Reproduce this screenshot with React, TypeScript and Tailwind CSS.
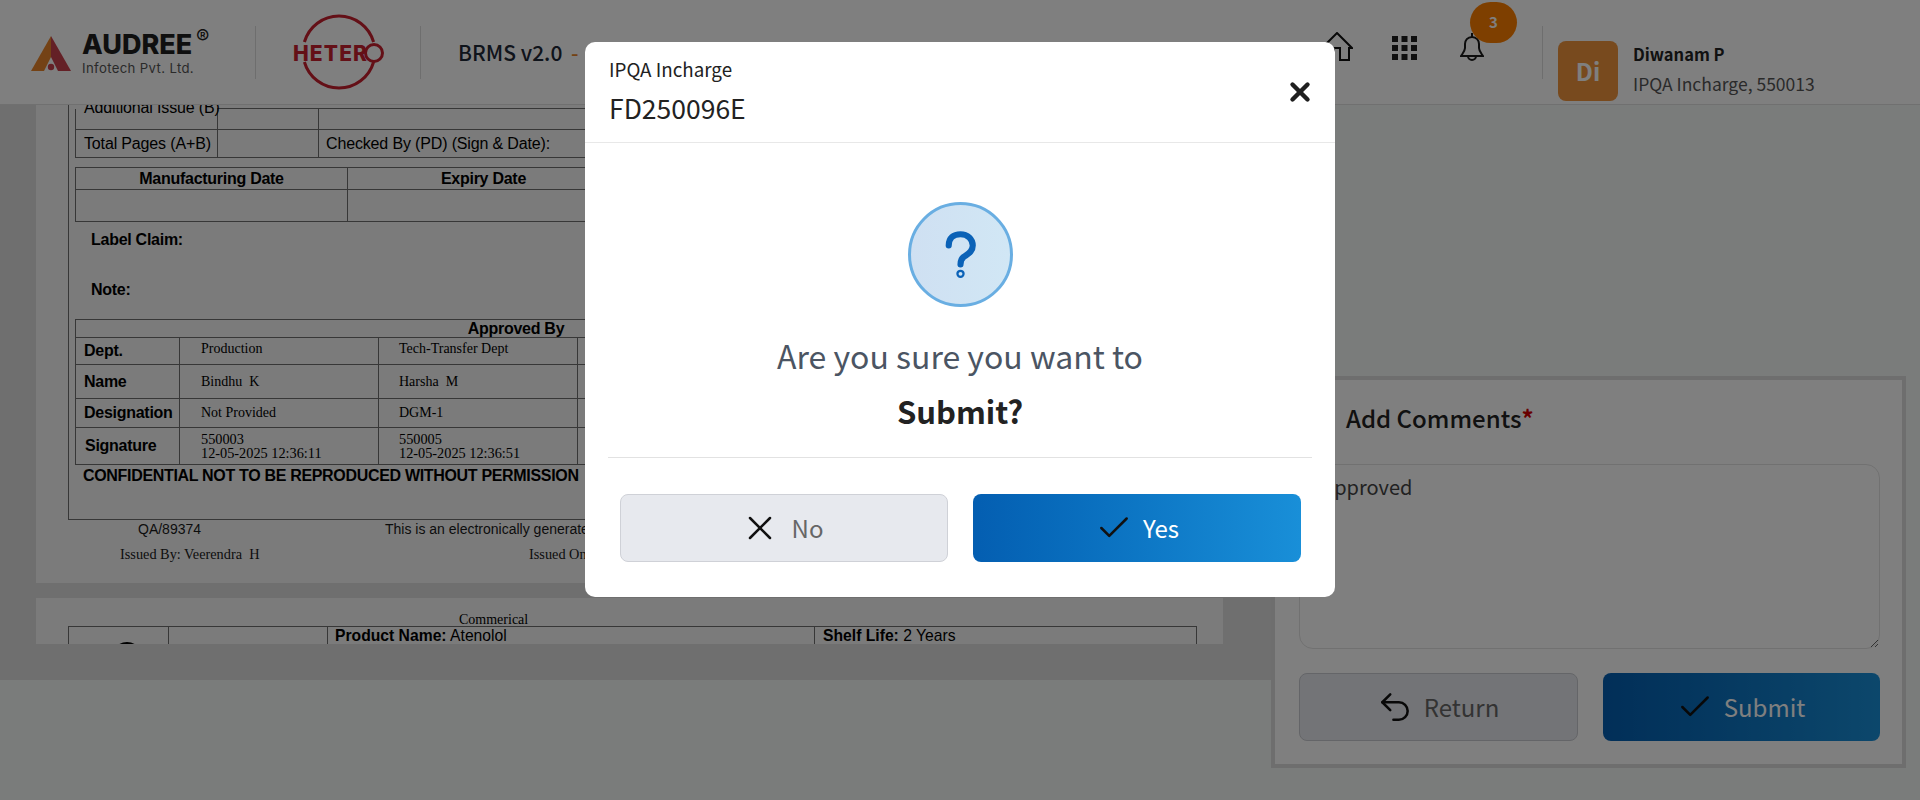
import { Check, Undo2, X } from "lucide-react";

const sans = "font-['Noto_Sans_CJK_SC','Noto_Sans',sans-serif]";
const arial = "font-['Liberation_Sans',Arial,sans-serif]";
const serif = "font-['Liberation_Serif','Times_New_Roman',serif]";
const cell = "border border-[#6e6e6e] p-0 align-middle";
const rowHead = `${arial} text-[16px] font-bold tracking-[-0.27px]`;

function AudreeLogo() {
  return (
    <div className="relative mt-[30px] flex h-[48px] w-[176px] items-start">
      <svg width="40" height="35" viewBox="0 0 40 35" className="mt-[6px] shrink-0">
        <polygon points="0,35 20,0 20,21 13,35" fill="#e8852a" />
        <polygon points="20,0 40,35 27,35 20,21" fill="#c8404c" />
        <circle cx="20" cy="31" r="3.2" fill="#c8404c" />
      </svg>
      <div className="ml-[11px] flex flex-col pt-[3px] font-['Inter',sans-serif] whitespace-nowrap">
        <span className="text-[27px] leading-[24px] font-extrabold text-[#1f1f1f]">AUDREE</span>
        <span className="mt-[2px] text-[13.2px] leading-[18px] tracking-[0.35px] text-[#555]">Infotech Pvt. Ltd.</span>
      </div>
      <span className="-mt-[5px] ml-[2px] font-['Inter',sans-serif] text-[20px] leading-[24px] text-[#222]">®</span>
    </div>
  );
}

function HeteroLogo() {
  return (
    <svg width="92" height="76" viewBox="0 0 92 76" className="mt-[14px] ml-[36px]">
      <path d="M12.4 28 A36 36 0 0 1 81.6 28 M81.6 48 A36 36 0 0 1 12.4 48" fill="none" stroke="#c8202f" strokeWidth="3" />
      <text x="1" y="47" fontFamily="Inter, sans-serif" fontWeight="800" fontSize="21" fill="#c8202f" textLength="74">
        HETER
      </text>
      <circle cx="82" cy="39" r="8.5" fill="none" stroke="#c8202f" strokeWidth="3" />
    </svg>
  );
}

function Header() {
  return (
    <header className={`flex h-[105px] shrink-0 items-start border-b border-[#e0e0e0] bg-white pl-[31px] ${sans}`}>
      <AudreeLogo />
      <div className="mt-[26px] ml-[48px] h-[53px] w-px bg-[#dcdcdc]" />
      <HeteroLogo />
      <div className="mt-[26px] ml-[36px] h-[53px] w-px bg-[#dcdcdc]" />
      <div className="mt-[35px] ml-[37px] text-[21px] leading-[34px] font-medium text-[#1f2937]">
        BRMS v2.0 <span className="ml-[4px] text-[#e8852a]">-</span>
      </div>

      <div className="ml-auto flex items-start pr-[86px]">
        <svg width="32" height="30" viewBox="0 0 32 30" className="mt-[32px]">
          <path d="M16 1 L31 16 H28 V28 H19 V16 H13 V28 H4 V16 H1 Z" fill="none" stroke="#111" strokeWidth="2" />
        </svg>
        <svg width="25" height="24" viewBox="0 0 25 24" className="mt-[36px] ml-[39px]" fill="#1f1f1f">
          {[0, 9.5, 19].map((x) =>
            [0, 9, 18].map((y) => <rect key={`${x}-${y}`} x={x} y={y} width="6" height="6" />),
          )}
        </svg>
        <div className="relative mt-[33px] ml-[43px] h-[30px] w-[24px]">
          <svg width="24" height="30" viewBox="0 0 24 30" fill="none" stroke="#1a1a1a" strokeWidth="2">
            <path d="M12 0 V4 M12 4 C7.5 4 5 7.5 5 11 V15 C5 18 3 20 1 23 H23 C21 20 19 18 19 15 V11 C19 7.5 16.5 4 12 4 Z M8 23 A4 4 0 0 0 16 23" />
          </svg>
          <span className="absolute top-[-31px] left-[10px] flex h-[41px] w-[47px] items-center justify-center rounded-full bg-[#fd7f00] text-[15px] font-bold text-white">
            3
          </span>
        </div>
        <div className="mt-[26px] ml-[58px] h-[53px] w-px bg-[#dcdcdc]" />
        <div className="mt-[41px] ml-[15px] flex h-[60px] w-[60px] items-center justify-center rounded-lg bg-[#f0943c] text-[24px] font-semibold text-white">
          Di
        </div>
        <div className="mt-[39px] ml-[15px] flex w-[201px] flex-col">
          <span className="text-[16.5px] leading-[30px] font-semibold text-[#222]">Diwanam P</span>
          <span className="text-[17.5px] leading-[30px] text-[#555]">IPQA Incharge, 550013</span>
        </div>
      </div>
    </header>
  );
}

function FirstPage() {
  return (
    <div className={`h-[478px] bg-[#f7f7f7] pl-[32px] text-black ${arial}`}>
      <div className="h-[415px] border-b border-l border-[#6e6e6e] pt-[3px] pl-[6px]">
        <table className="w-[1122px] table-fixed border-collapse text-[16px] tracking-[-0.15px]">
          <colgroup>
            <col className="w-[142px]" />
            <col className="w-[101px]" />
            <col />
          </colgroup>
          <tbody>
            <tr className="h-[21px]">
              <td className={`${cell} border-t-0`}>
                <span className="relative -top-[11px] block pl-[8px] leading-[18px] whitespace-nowrap">Additional Issue (B)</span>
              </td>
              <td className={cell} />
              <td className={cell} />
            </tr>
            <tr className="h-[28px]">
              <td className={`${cell} pl-[8px] whitespace-nowrap`}>Total Pages (A+B)</td>
              <td className={cell} />
              <td className={`${cell} pl-[7px]`}>Checked By (PD) (Sign &amp; Date):</td>
            </tr>
          </tbody>
        </table>

        <table className="mt-[9px] w-[1122px] table-fixed border-collapse text-[16px] leading-[18px] font-bold tracking-[-0.27px]">
          <colgroup>
            <col className="w-[272px]" />
            <col className="w-[272px]" />
            <col />
          </colgroup>
          <tbody>
            <tr className="h-[22px] text-center">
              <td className={cell}>Manufacturing Date</td>
              <td className={cell}>Expiry Date</td>
              <td className={cell} />
            </tr>
            <tr className="h-[32px]">
              <td className={cell} />
              <td className={cell} />
              <td className={cell} />
            </tr>
          </tbody>
        </table>

        <p className="mt-[8px] pl-[16px] text-[16px] leading-[20px] font-bold tracking-[-0.27px]">Label Claim:</p>
        <p className="mt-[30px] pl-[16px] text-[16px] leading-[20px] font-bold tracking-[-0.27px]">Note:</p>

        <table className="mt-[19px] w-[882px] table-fixed border-collapse">
          <colgroup>
            <col className="w-[104px]" />
            <col className="w-[199px]" />
            <col className="w-[199px]" />
            <col className="w-[190px]" />
            <col />
          </colgroup>
          <tbody className={`${serif} text-[14px] leading-[14px]`}>
            <tr className="h-[18px]">
              <td colSpan={5} className={`${cell} text-center ${rowHead}`}>
                Approved By
              </td>
            </tr>
            <tr className="h-[27px]">
              <td className={`${cell} pl-[8px] ${rowHead}`}>Dept.</td>
              <td className={`${cell} pb-[4px] pl-[21px]`}>Production</td>
              <td className={`${cell} pb-[4px] pl-[20px]`}>Tech-Transfer Dept</td>
              <td className={cell} />
              <td className={cell} />
            </tr>
            <tr className="h-[34px]">
              <td className={`${cell} pl-[8px] ${rowHead}`}>Name</td>
              <td className={`${cell} pl-[21px] whitespace-pre`}>Bindhu  K</td>
              <td className={`${cell} pl-[20px] whitespace-pre`}>Harsha  M</td>
              <td className={cell} />
              <td className={cell} />
            </tr>
            <tr className="h-[29px]">
              <td className={`${cell} pl-[8px] ${rowHead}`}>Designation</td>
              <td className={`${cell} pl-[21px]`}>Not Provided</td>
              <td className={`${cell} pl-[20px]`}>DGM-1</td>
              <td className={cell} />
              <td className={cell} />
            </tr>
            <tr className="h-[37px]">
              <td className={`${cell} pl-[9px] ${rowHead}`}>Signature</td>
              <td className={`${cell} pl-[21px] text-[14.3px] leading-[14px]`}>
                550003
                <br />
                12-05-2025 12:36:11
              </td>
              <td className={`${cell} pl-[20px] text-[14.3px] leading-[14px]`}>
                550005
                <br />
                12-05-2025 12:36:51
              </td>
              <td className={cell} />
              <td className={cell} />
            </tr>
          </tbody>
        </table>
        <p className="mt-[1px] pl-[8px] text-[16px] leading-[20px] font-bold tracking-[-0.32px]">
          CONFIDENTIAL NOT TO BE REPRODUCED WITHOUT PERMISSION
        </p>
      </div>

      <div className="flex h-[18px] items-center text-[14px] text-[#1a1a1a]">
        <span className="ml-[70px] w-[247px]">QA/89374</span>
        <span>This is an electronically generated document</span>
      </div>
      <div className={`mt-[8px] flex h-[18px] items-center text-[14.3px] text-[#1a1a1a] ${serif}`}>
        <span className="ml-[52px] w-[409px] whitespace-pre">Issued By: Veerendra  H</span>
        <span>Issued On: 12-05-2025</span>
      </div>
    </div>
  );
}

function SecondPage() {
  return (
    <div className={`mt-[15px] h-[46px] overflow-hidden bg-[#f7f7f7] pl-[32px] text-black ${arial}`}>
      <p className={`pt-[15px] pl-[391px] text-[14px] leading-[13px] ${serif}`}>Commerical</p>
      <table className="w-[1129px] table-fixed border-collapse text-[15.7px]">
        <colgroup>
          <col className="w-[100px]" />
          <col className="w-[159px]" />
          <col className="w-[487px]" />
          <col />
        </colgroup>
        <tbody>
          <tr className="h-[60px]">
            <td className={`${cell} align-top`}>
              <div className="mt-[15px] ml-[43px] h-[30px] w-[30px] rounded-full bg-black" />
            </td>
            <td className={cell} />
            <td className={`${cell} pl-[7px] align-top leading-[18px]`}>
              <b>Product Name:</b> Atenolol
            </td>
            <td className={`${cell} pl-[8px] align-top leading-[18px]`}>
              <b>Shelf Life:</b> 2 Years
            </td>
          </tr>
        </tbody>
      </table>
    </div>
  );
}

function CommentsPanel() {
  return (
    <div className={`h-[392px] w-[635px] border-[4px] border-[#dcdcdc] bg-white pt-[20px] pr-[22px] pl-[24px] ${sans}`}>
      <h3 className="pl-[47px] text-[24px] leading-[36px] font-medium text-[#222]">
        Add Comments<span className="font-bold text-[#d00000]">*</span>
      </h3>
      <textarea
        defaultValue="Approved"
        className="mt-[28px] block h-[185px] w-full rounded-[14px] border border-[#e2e2e2] px-[22px] py-[5px] text-[20px] leading-[34px] text-[#444] outline-none"
      />
      <div className="mt-[24px] flex gap-[25px]">
        <button className="flex h-[68px] flex-1 items-center justify-center gap-[10px] rounded-lg border border-[#c8cad0] bg-[#e7e9ee] pr-[2px] text-[24px] text-[#666]">
          <Undo2 size={38} strokeWidth={1.6} color="#111" />
          Return
        </button>
        <button className="flex h-[68px] flex-1 items-center justify-center gap-[10px] rounded-lg bg-gradient-to-r from-[#045eb1] to-[#198fd8] pr-[2px] text-[24px] text-white">
          <Check size={38} strokeWidth={1.6} color="#111" />
          Submit
        </button>
      </div>
    </div>
  );
}

function ConfirmModal() {
  return (
    <div className={`fixed inset-0 z-10 flex items-start justify-center bg-black/50 pt-[42px] ${sans}`}>
      <div className="h-[555px] w-[750px] rounded-[10px] bg-white">
        <div className="flex h-[101px] items-center justify-between border-b border-[#e8e8e8] pr-[20px] pl-[24px]">
          <div className="flex flex-col pb-[4px]">
            <span className="text-[18.8px] leading-[30px] text-[#222]">IPQA Incharge</span>
            <span className="mt-[5px] text-[26.5px] leading-[38px] text-[#222]">FD250096E</span>
          </div>
          <X size={30} strokeWidth={3.5} color="#1f1f1f" />
        </div>

        <div className="flex flex-col items-center pt-[59px]">
          <div className="flex h-[105px] w-[105px] items-center justify-center rounded-full border-[3px] border-[#69aee2] bg-gradient-to-r from-[#cfe0f2] to-[#d1e7f5]">
            <svg width="99" height="99" viewBox="0 0 105 105" fill="none" stroke="#0b62b7" strokeWidth="6.5" strokeLinecap="round">
              <path d="M40 43 C40 35 45 31 52.5 31 C60 31 65.5 36 65.5 43 C65.5 50 60 52 56 55 C53 57 52.5 59 52.5 63" />
              <circle cx="52.5" cy="73" r="1.2" />
            </svg>
          </div>
          <p className="mt-[27px] text-[32px] leading-[42px] text-[#4b5563]">Are you sure you want to</p>
          <p className="mt-[14px] text-[31px] leading-[42px] font-semibold text-[#222]">Submit?</p>
        </div>

        <div className="mx-[23px] mt-[25px] border-t border-[#e2e2e2]" />

        <div className="mt-[36px] flex gap-[25px] pl-[35px]">
          <button className="flex h-[68px] w-[328px] items-center justify-center gap-[12px] rounded-lg border border-[#cfd1d7] bg-[#e7e9ee] pr-[5px] text-[24px] text-[#666]">
            <X size={40} strokeWidth={1.5} color="#111" />
            No
          </button>
          <button className="flex h-[68px] w-[328px] items-center justify-center gap-[10px] rounded-lg bg-gradient-to-r from-[#045eb1] to-[#198fd8] text-[24px] text-white">
            <Check size={38} strokeWidth={1.6} color="#111" />
            Yes
          </button>
        </div>
      </div>
    </div>
  );
}

export default function App() {
  return (
    <div className="flex h-[800px] flex-col overflow-hidden bg-[#f4f8f6]">
      <Header />
      <main className="flex">
        <section className="h-[575px] w-[1271px] shrink-0 overflow-hidden bg-[#dedede] pr-[48px] pl-[36px]">
          <FirstPage />
          <SecondPage />
        </section>
        <aside className="pt-[271px]">
          <CommentsPanel />
        </aside>
      </main>
      <ConfirmModal />
    </div>
  );
}
